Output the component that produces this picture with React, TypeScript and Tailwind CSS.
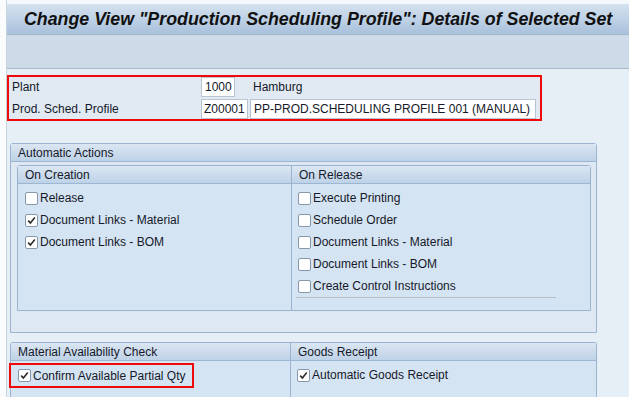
import type { ReactNode } from 'react'

function CheckBox({ checked }: { checked?: boolean }) {
  return (
    <span className="w-[13px] h-[13px] shrink-0 rounded-[2px] border border-[#8797ab] bg-white flex items-center justify-center">
      {checked && (
        <svg width="9" height="9" viewBox="0 0 9 9">
          <path d="M1.2 4.6 L3.4 7 L7.8 1.6" fill="none" stroke="#2b2b2b" strokeWidth="1.6" />
        </svg>
      )}
    </span>
  )
}

function CheckRow({ label, checked }: { label: string; checked?: boolean }) {
  return (
    <div className="h-[22px] flex items-center gap-[2px]">
      <CheckBox checked={checked} />
      <span>{label}</span>
    </div>
  )
}

function Header({ children, className = '' }: { children: ReactNode; className?: string }) {
  return (
    <div
      className={`h-[18px] flex items-center px-[7px] bg-gradient-to-b from-[#dbe6f2] to-[#bed2e7] border-b border-[#9db7d3] ${className}`}
    >
      {children}
    </div>
  )
}

export default function App() {
  return (
    <div
      className="w-[629px] h-[397px] overflow-hidden flex bg-white text-[12px] text-[#15192a] leading-none"
      style={{ fontFamily: '"Liberation Sans", Arial, sans-serif' }}
    >
      <div className="w-[7px] bg-[#fafbfd] border-r border-[#c9d3de]" />
      <div className="flex-1 flex flex-col bg-[#e6eef6]">
        <div className="h-[4px] bg-[#f5f8fb]" />
        <div className="h-[31px] flex items-center pl-[17px] pt-[1px] bg-gradient-to-b from-[#d5e2ef] to-[#a9c1dc] border-b border-[#a2b6cc]">
          <h1 className="text-[17.8px] font-bold italic text-[#111] whitespace-nowrap">
            Change View "Production Scheduling Profile": Details of Selected Set
          </h1>
        </div>
        <div className="h-[34px] bg-[#cddbe8] border-b border-[#a9b8c8]" />

        <div className="mt-[6px] w-[535px] h-[46px] border-2 border-[#ee0a0a] flex flex-col justify-center gap-[2px] pl-[3px] bg-[#e1eaf3]">
          <div className="h-[20px] flex items-center">
            <span className="w-[189px]">Plant</span>
            <span className="w-[34px] h-[20px] border border-[#b8c4d0] bg-white flex items-center px-[3px]">
              1000
            </span>
            <span className="ml-[18px]">Hamburg</span>
          </div>
          <div className="h-[20px] flex items-center">
            <span className="w-[189px]">Prod. Sched. Profile</span>
            <span className="w-[47px] h-[20px] border border-[#b8c4d0] bg-white flex items-center px-[2px]">
              Z00001
            </span>
            <span className="ml-[2px] w-[286px] h-[20px] border border-[#b8c4d0] bg-white flex items-center px-[3px]">
              PP-PROD.SCHEDULING PROFILE 001 (MANUAL)
            </span>
          </div>
        </div>

        <div className="ml-[3px] mt-[22px] w-[587px] h-[190px] border border-[#9ab4d0] rounded-t-[3px] bg-[#dde8f3] flex flex-col">
          <Header>Automatic Actions</Header>
          <div className="mt-[3px] ml-[6px] mr-[5px] h-[146px] border border-[#9ab4d0] rounded-t-[3px] bg-[#d5e4f2] flex">
            <div className="w-[274px] border-r border-[#9ab4d0] flex flex-col">
              <Header>On Creation</Header>
              <div className="pl-[7px] pt-[3px]">
                <CheckRow label="Release" />
                <CheckRow label="Document Links - Material" checked />
                <CheckRow label="Document Links - BOM" checked />
              </div>
            </div>
            <div className="flex-1 flex flex-col">
              <Header>On Release</Header>
              <div className="pl-[6px] pt-[3px]">
                <CheckRow label="Execute Printing" />
                <CheckRow label="Schedule Order" />
                <CheckRow label="Document Links - Material" />
                <CheckRow label="Document Links - BOM" />
                <CheckRow label="Create Control Instructions" />
                <div className="w-[260px] -ml-[2px] h-px bg-[#b9bfc6]" />
              </div>
            </div>
          </div>
        </div>

        <div className="ml-[3px] mt-[9px] w-[587px] flex flex-1">
          <div className="w-[281px] border border-b-0 border-[#9ab4d0] rounded-tl-[3px] bg-[#d5e4f2] flex flex-col">
            <Header>Material Availability Check</Header>
            <div className="mt-[2px] -ml-[2px] w-[185px] h-[25px] border-2 border-[#ee0a0a] flex items-center pl-[7px] gap-[2px]">
              <CheckBox checked />
              <span>Confirm Available Partial Qty</span>
            </div>
          </div>
          <div className="flex-1 border border-l-0 border-b-0 border-[#9ab4d0] rounded-tr-[3px] bg-[#d5e4f2] flex flex-col">
            <Header>Goods Receipt</Header>
            <div className="pl-[6px] pt-[3px]">
              <CheckRow label="Automatic Goods Receipt" checked />
            </div>
          </div>
        </div>
      </div>
    </div>
  )
}
